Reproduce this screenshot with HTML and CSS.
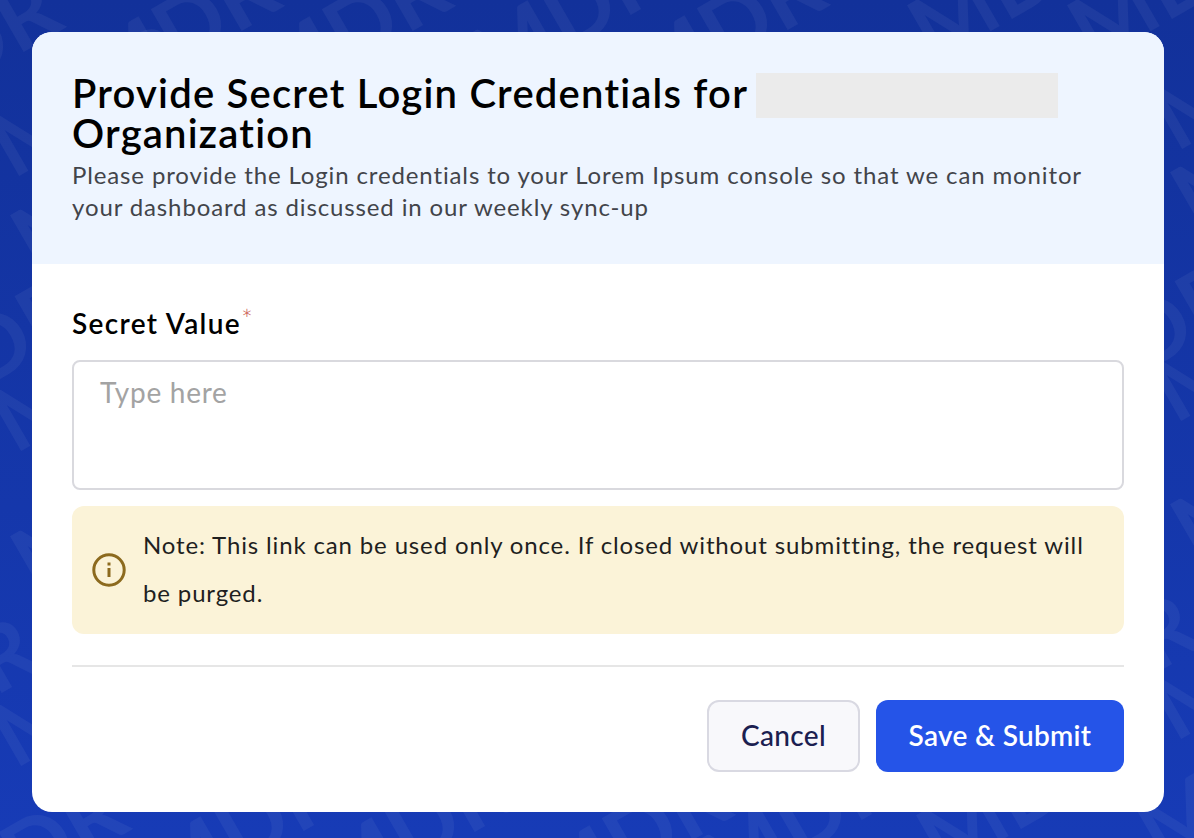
FILE: index.html
```html
<!DOCTYPE html>
<html lang="en">
<head>
<meta charset="utf-8">
<title>Provide Secret Login Credentials</title>
<link rel="stylesheet" href="styles.css">
</head>
<body>
<svg class="watermark" width="1194" height="838" aria-hidden="true">
  <defs>
    <text id="mdr" class="wm-text" text-anchor="end" transform="rotate(-30)">MDR</text>
  </defs>
  <use href="#mdr" transform="translate(67 27)"/>
  <use href="#mdr" transform="translate(285 6)"/>
  <use href="#mdr" transform="translate(456 6)"/>
  <use href="#mdr" transform="translate(674 -10)"/>
  <use href="#mdr" transform="translate(831 5)"/>
  <use href="#mdr" transform="translate(1114 -40)"/>
  <use href="#mdr" transform="translate(1274 -40)"/>
  <use href="#mdr" transform="translate(194 75)"/>
  <use href="#mdr" transform="translate(217 170)"/>
  <use href="#mdr" transform="translate(90 327)"/>
  <use href="#mdr" transform="translate(196 350)"/>
  <use href="#mdr" transform="translate(217 491)"/>
  <use href="#mdr" transform="translate(45 668)"/>
  <use href="#mdr" transform="translate(196 665)"/>
  <use href="#mdr" transform="translate(133 829)"/>
  <use href="#mdr" transform="translate(347 806)"/>
  <use href="#mdr" transform="translate(518 807)"/>
  <use href="#mdr" transform="translate(736 815)"/>
  <use href="#mdr" transform="translate(905 795)"/>
  <use href="#mdr" transform="translate(1123 770)"/>
  <use href="#mdr" transform="translate(1342 762)"/>
  <use href="#mdr" transform="translate(1357 48)"/>
  <use href="#mdr" transform="translate(1377 127)"/>
  <use href="#mdr" transform="translate(1250 312)"/>
  <use href="#mdr" transform="translate(1356 320)"/>
  <use href="#mdr" transform="translate(1377 459)"/>
  <use href="#mdr" transform="translate(1205 645)"/>
  <use href="#mdr" transform="translate(1356 638)"/>
</svg>
<main class="dialog">
  <header class="dialog-head">
    <h1 class="title">Provide Secret Login Credentials for <span class="redacted"></span> Organization</h1>
    <p class="subtitle">Please provide the Login credentials to your Lorem Ipsum console so that we can monitor your dashboard as discussed in our weekly sync-up</p>
  </header>
  <section class="dialog-body">
    <label class="field-label" for="secret">Secret Value<sup class="req">*</sup></label>
    <textarea class="field" id="secret" placeholder="Type here"></textarea>
    <div class="note">
      <svg class="note-icon" width="34" height="34" viewBox="0 0 34 34" fill="none" aria-hidden="true">
        <circle cx="17" cy="17" r="15.2" stroke="#8c6a1e" stroke-width="3"/>
        <rect x="15.5" y="15" width="3" height="9" fill="#8c6a1e"/>
        <rect x="15.5" y="9.5" width="3" height="3" fill="#8c6a1e"/>
      </svg>
      <p class="note-text">Note: This link can be used only once. If closed without submitting, the request will be purged.</p>
    </div>
    <hr class="rule">
    <div class="actions">
      <button class="btn btn-cancel" type="button">Cancel</button>
      <button class="btn btn-submit" type="button">Save &amp; Submit</button>
    </div>
  </section>
</main>
</body>
</html>
```
FILE: styles.css
```css
* { box-sizing: border-box; }
html, body { margin: 0; height: 100%; }
body {
  width: 1194px;
  height: 838px;
  overflow: hidden;
  position: relative;
  padding: 32px 30px 26px 32px;
  background: linear-gradient(180deg, #12319a 0%, #173bb6 100%);
  font-family: Lato, sans-serif;
}
.watermark { position: absolute; left: 0; top: 0; }
.wm-text {
  font-family: Lato, sans-serif;
  font-weight: 700;
  font-size: 89px;
  fill: rgba(255, 255, 255, 0.05);
}
.dialog {
  position: relative;
  width: 1132px;
  height: 780px;
  background: #fff;
  border-radius: 20px;
  overflow: hidden;
  display: flex;
  flex-direction: column;
}
.dialog-head {
  background: #eef5ff;
  height: 232px;
  padding: 41px 40px 0;
}
.title {
  margin: 0;
  font-size: 40px;
  font-weight: 600;
  line-height: 40px;
  color: #000;
  letter-spacing: 1.2px;
}
.redacted {
  display: inline-block;
  width: 302px;
  height: 45px;
  margin: 0 0 -6px -2px;
  background: #ebebeb;
  vertical-align: top;
}
.subtitle {
  margin: 6px 0 0;
  font-size: 24px;
  line-height: 32px;
  color: #42444a;
  letter-spacing: 0.87px;
}
.dialog-body {
  flex: 1;
  padding: 39px 40px 0;
  display: flex;
  flex-direction: column;
}
.field-label {
  font-size: 28px;
  font-weight: 600;
  line-height: 40px;
  color: #000;
  letter-spacing: 1.35px;
}
.req {
  color: #c8524a;
  font-size: 28px;
  font-weight: 300;
  line-height: 0;
  vertical-align: 5px;
  letter-spacing: 0;
}
.field {
  display: block;
  margin-top: 17px;
  width: 1052px;
  height: 130px;
  border: 2px solid #d9d9de;
  border-radius: 8px;
  padding: 12px 26px;
  font-family: Lato, sans-serif;
  font-size: 28px;
  line-height: 36px;
  letter-spacing: 0.72px;
  resize: none;
  outline: none;
}
.field::placeholder { color: #a3a3a3; opacity: 1; }
.note {
  margin-top: 16px;
  height: 128px;
  background: #fbf3d8;
  border-radius: 12px;
  display: flex;
  align-items: center;
  gap: 17px;
  padding: 0 20px;
}
.note-icon { flex: none; }
.note-text {
  margin: -2px 0 0;
  font-size: 24px;
  line-height: 48px;
  color: #1f1f1f;
  letter-spacing: 0.855px;
}
.rule {
  width: 100%;
  margin: 31px 0 0;
  border: 0;
  border-top: 2px solid #e6e6e6;
}
.actions {
  margin-top: 33px;
  display: flex;
  justify-content: flex-end;
  gap: 16px;
}
.btn {
  height: 72px;
  padding: 0 0 2px;
  border-radius: 12px;
  font-family: Lato, sans-serif;
  font-size: 28px;
  font-weight: 600;
  letter-spacing: 0.3px;
}
.btn-cancel {
  width: 153px;
  background: #f8f8fb;
  border: 2px solid #d9d9e2;
  color: #1b2050;
  font-weight: 500;
}
.btn-submit {
  width: 248px;
  background: #2554e8;
  border: 0;
  color: #fff;
}
```
